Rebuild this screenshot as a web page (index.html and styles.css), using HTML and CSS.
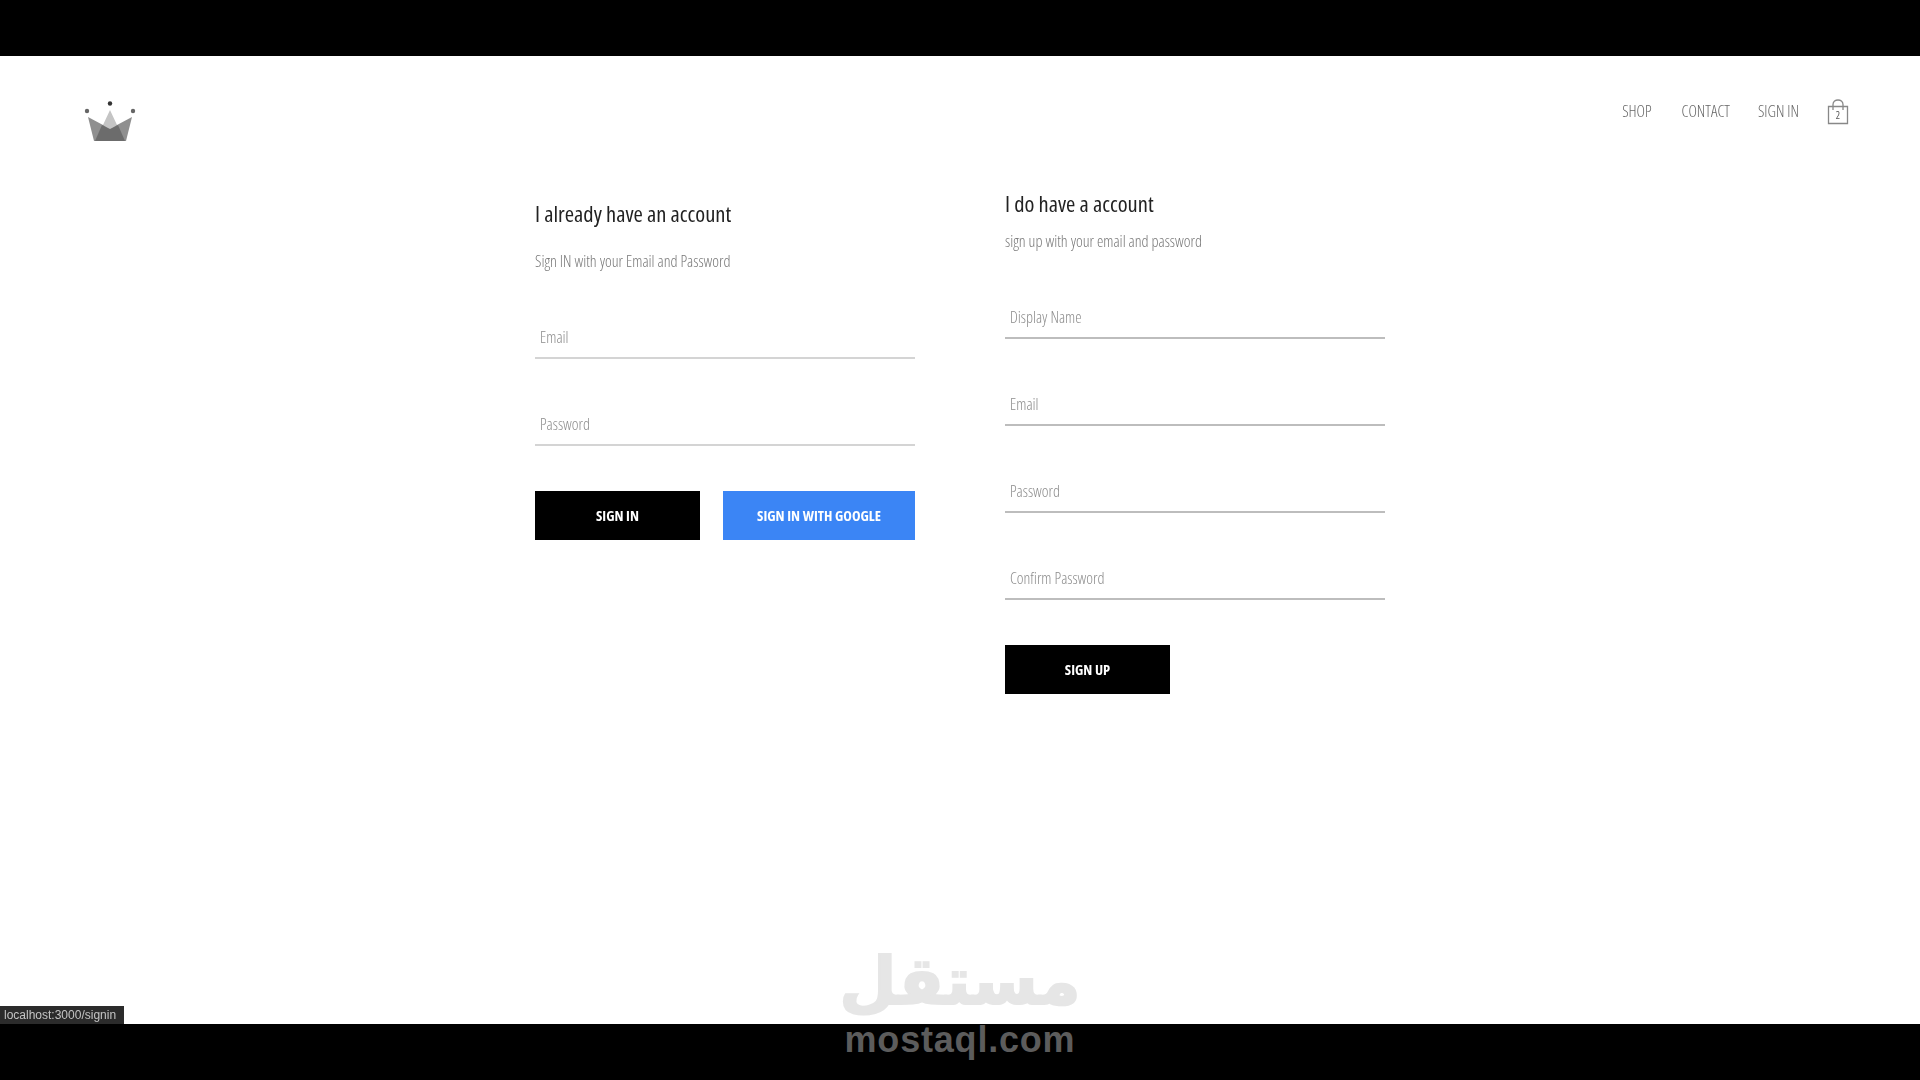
FILE: index.html
```html
<!DOCTYPE html>
<html>
<head>
  <meta charset="utf-8">
  <link rel="stylesheet" href="styles.css">
</head>
<body>
  <div class="letterbox"></div>

  <div class="page">
    <div class="header">
      <a class="logo" href="#">
        <svg width="52" height="42" viewBox="0 0 52 42">
          <circle cx="3" cy="10" r="2.200" fill="#666"/>
          <circle cx="26" cy="2.500" r="2.200" fill="#333"/>
          <circle cx="49" cy="10" r="2.200" fill="#666"/>
          <path d="M4 16 L19 24 L33 24 L48 16 L42 40 L10 40 Z" fill="#8f8f8f"/>
          <path d="M26 9 L33 24 L26 29 L19 24 Z" fill="#c4c4c4"/>
          <path d="M11 40 L18 24 L26 28 L34 24 L41 40 Z" fill="#6c6c6c"/>
        </svg>
      </a>
      <div class="nav">
        <a href="#">SHOP</a>
        <a href="#">CONTACT</a>
        <a href="#">SIGN IN</a>
        <div class="bag">
          <svg width="22" height="26" viewBox="0 0 22 26">
            <path d="M1.500 7.500 H20.500 V24.500 H1.500 Z" fill="none" stroke="#888" stroke-width="1.300"/>
            <path d="M6 11 V5.500 C6 -0.500 16 -0.500 16 5.500 V11" fill="none" stroke="#888" stroke-width="1.300"/>
          </svg>
          <span class="bag-count">2</span>
        </div>
      </div>
    </div>

    <div class="auth">
      <div class="sign-in">
        <h2>I already have an account</h2>
        <p>Sign IN with your Email and Password</p>
        <div class="field"><input type="email" placeholder="Email"></div>
        <div class="field"><input type="password" placeholder="Password"></div>
        <div class="buttons">
          <button class="black-btn">SIGN IN</button>
          <button class="google-btn">SIGN IN WITH GOOGLE</button>
        </div>
      </div>

      <div class="sign-up">
        <h2>I do have a account</h2>
        <p>sign up with your email and password</p>
        <div class="field"><input type="text" placeholder="Display Name"></div>
        <div class="field"><input type="email" placeholder="Email"></div>
        <div class="field"><input type="password" placeholder="Password"></div>
        <div class="field"><input type="password" placeholder="Confirm Password"></div>
        <div class="buttons">
          <button class="black-btn">SIGN UP</button>
        </div>
      </div>
    </div>

    <div class="status-url">localhost:3000/signin</div>
  </div>

  <div class="letterbox"></div>

  <div class="watermark">
    <div class="watermark-ar">مستقل</div>
    <div class="watermark-en">mostaql.com</div>
  </div>
</body>
</html>
```

FILE: styles.css
```css
* {
  box-sizing: border-box;
}

body {
  margin: 0;
  height: 1080px;
  overflow: hidden;
  font-family: "Open Sans", "Liberation Sans", sans-serif;
  font-stretch: 75%;
  background-color: #000;
  display: flex;
  flex-direction: column;
}

.letterbox {
  height: 56px;
  background-color: #000;
}

/* the source is a soft video frame */
.page {
  position: relative;
  height: 968px;
  background-color: #fff;
  filter: blur(0.45px);
}

.header {
  display: flex;
  justify-content: space-between;
  align-items: flex-start;
  padding: 45px 71px 0 84px;
  height: 129px;
}

.logo {
  display: block;
  height: 42px;
}

.nav {
  display: flex;
  align-items: center;
  gap: 28px;
  height: 24px;
  margin-top: -2px;
}

.nav a {
  color: #666;
  font-size: 16px;
  font-weight: 300;
  text-decoration: none;
}

.nav a:first-child {
  margin-right: 2px;
}

.bag {
  position: relative;
  width: 22px;
  height: 26px;
  margin-top: 2px;
}

.bag-count {
  position: absolute;
  left: 0;
  right: 0;
  top: 9px;
  text-align: center;
  font-size: 10px;
  color: #555;
}

.auth {
  display: flex;
  justify-content: center;
  gap: 90px;
}

.sign-in,
.sign-up {
  width: 380px;
}

.sign-in {
  padding-top: 10px;
}

h2 {
  margin: 0;
  font-size: 22.5px;
  font-weight: 400;
  line-height: 38px;
  color: #222;
}

p {
  margin: 0;
  font-size: 16px;
  font-weight: 300;
  line-height: 20px;
  color: #777;
}

.sign-in p {
  margin-top: 18px;
}

.sign-up p {
  margin-top: 8px;
}

.field {
  margin-top: 37px;
  height: 50px;
  border-bottom: 2px solid #bdbdbd;
}

.sign-in .field {
  border-bottom-color: #d4d4d4;
}

.sign-in .field:first-of-type {
  margin-top: 38px;
}

.sign-up .field:first-of-type {
  margin-top: 38px;
}

input {
  display: block;
  width: 100%;
  height: 100%;
  padding: 8px 5px 0;
  border: none;
  outline: none;
  background: none;
  font-family: inherit;
  font-stretch: inherit;
  font-size: 16px;
  font-weight: 300;
  color: #555;
}

input::placeholder {
  color: #8c8c8c;
  opacity: 1;
}

.buttons {
  display: flex;
  gap: 23px;
  margin-top: 45px;
}

button {
  height: 49px;
  border: none;
  color: #fff;
  font-family: inherit;
  font-stretch: inherit;
  font-size: 14.5px;
  font-weight: 700;
  cursor: pointer;
}

.black-btn {
  width: 165px;
  background-color: #000;
}

.google-btn {
  width: 192px;
  background-color: #3b85f5;
}

.status-url {
  position: absolute;
  left: 0;
  bottom: 0;
  width: 124px;
  height: 18px;
  padding-left: 4px;
  background-color: #2b2b2b;
  color: #c4c4c4;
  font-family: "Liberation Sans", sans-serif;
  font-stretch: normal;
  font-size: 12px;
  line-height: 18px;
  white-space: nowrap;
}

.watermark {
  position: absolute;
  left: 0;
  right: 0;
  top: 943px;
  text-align: center;
  pointer-events: none;
}

.watermark-ar {
  height: 75px;
  font-family: "DejaVu Sans", sans-serif;
  font-stretch: normal;
  font-size: 66px;
  font-weight: 700;
  line-height: 78px;
  color: #e6e6e6;
  -webkit-text-stroke: 2px #e6e6e6;
}

.watermark-en {
  font-family: "Liberation Sans", sans-serif;
  font-stretch: normal;
  font-size: 36px;
  font-weight: 700;
  line-height: 44px;
  letter-spacing: 0.8px;
  color: #5c5c5c;
}
```
